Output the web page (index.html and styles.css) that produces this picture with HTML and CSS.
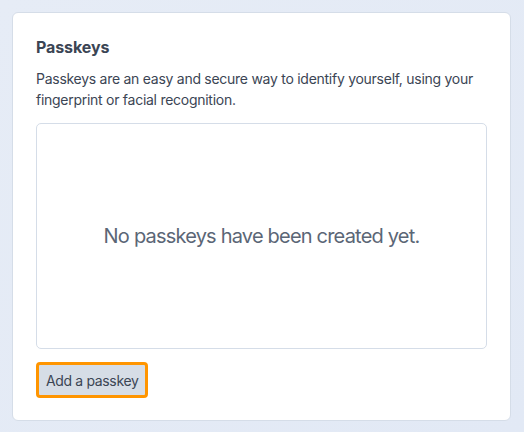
FILE: index.html
```html
<!DOCTYPE html>
<html>
<head>
<meta charset="utf-8">
<link rel="stylesheet" href="styles.css">
</head>
<body>
<div class="page">
  <section class="card">
    <h2 class="title">Passkeys</h2>
    <p class="desc">Passkeys are an easy and secure way to identify yourself, using your fingerprint or facial recognition.</p>
    <div class="empty">No passkeys have been created yet.</div>
    <div class="actions">
      <button class="btn">Add a passkey</button>
    </div>
  </section>
</div>
</body>
</html>
```
FILE: styles.css
```css
html, body {
  margin: 0;
  padding: 0;
}
body {
  width: 524px;
  height: 432px;
  background: linear-gradient(135deg, #e6ecf6 0%, #e2e9f5 100%);
  font-family: Inter, "Noto Sans", sans-serif;
  color: #3b4554;
  overflow: hidden;
}
.page {
  padding: 12px 13px 12px 12px;
}
.card {
  box-sizing: border-box;
  height: 409px;
  background: #fff;
  border: 1px solid #d5dde8;
  border-radius: 6px;
  padding: 24px 23px 0 23px;
  display: flex;
  flex-direction: column;
}
.title {
  margin: 0;
  font-size: 16px;
  font-weight: 700;
  line-height: 20px;
  color: #3b4554;
  letter-spacing: -0.1px;
}
.desc {
  margin: 11px 0 0 0;
  font-size: 14px;
  line-height: 21px;
  color: #3b4554;
  letter-spacing: -0.27px;
}
.empty {
  margin-top: 13px;
  height: 226px;
  box-sizing: border-box;
  border: 1px solid #d5dde8;
  border-radius: 5px;
  display: flex;
  align-items: center;
  justify-content: center;
  font-size: 20px;
  letter-spacing: -0.8px;
  color: #5b6676;
}
.actions {
  margin-top: 13px;
  display: flex;
}
.btn {
  box-sizing: border-box;
  height: 36px;
  padding: 0 7px;
  background: #d6dde6;
  border: 3px solid #ff9500;
  border-radius: 4px;
  font-family: Inter, "Noto Sans", sans-serif;
  font-size: 14px;
  letter-spacing: -0.35px;
  color: #3b4554;
}
```
